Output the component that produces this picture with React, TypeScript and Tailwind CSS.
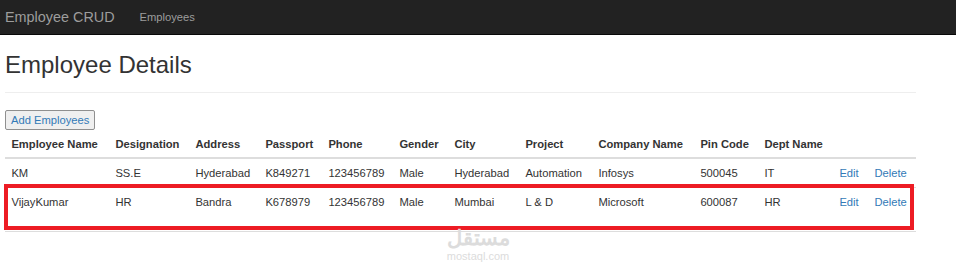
export default function App() {
  const columns = [
    { label: "Employee Name", w: "w-[104px]" },
    { label: "Designation", w: "w-[80px]" },
    { label: "Address", w: "w-[70px]" },
    { label: "Passport", w: "w-[63px]" },
    { label: "Phone", w: "w-[71px]" },
    { label: "Gender", w: "w-[55px]" },
    { label: "City", w: "w-[71px]" },
    { label: "Project", w: "w-[73px]" },
    { label: "Company Name", w: "w-[102px]" },
    { label: "Pin Code", w: "w-[64px]" },
    { label: "Dept Name", w: "w-[75px]" },
    { label: "", w: "w-[35px]" },
    { label: "", w: "" },
  ]

  const employees = [
    ["KM", "SS.E", "Hyderabad", "K849271", "123456789", "Male", "Hyderabad", "Automation", "Infosys", "500045", "IT"],
    ["VijayKumar", "HR", "Bandra", "K678979", "123456789", "Male", "Mumbai", "L & D", "Microsoft", "600087", "HR"],
  ]

  return (
    <div className="relative min-h-[266px] bg-white font-['Liberation_Sans',Arial,sans-serif] text-[11.2px] leading-[16px] text-[#333]">
      {/* Navbar */}
      <nav className="flex h-[35px] items-center bg-[#222] border-b border-[#080808]">
        <span className="ml-[5px] text-[14.4px] text-[#9d9d9d]">Employee CRUD</span>
        <span className="ml-[25px] text-[11.2px] text-[#9d9d9d]">Employees</span>
      </nav>

      <div className="w-[911px] ml-[5px]">
        <h2 className="mt-[17px] text-[24px] leading-[26px] text-[#333]">Employee Details</h2>
        <hr className="mt-[14px] border-t border-[#eee]" />

        <button className="mt-[17px] h-[20px] rounded-[2px] border border-[#8f8f8f] bg-[#efefef] px-[5px] text-[11.2px] leading-[16px] text-[#337ab7]">
          Add Employees
        </button>

        {/* Table */}
        <table className="w-full table-fixed border-collapse">
          <thead>
            <tr>
              {columns.map((c, i) => (
                <th
                  key={i}
                  className={`${c.w} border-b-2 border-[#ddd] px-[6.4px] pt-[6px] pb-[5px] text-left align-bottom font-bold`}
                >
                  {c.label}
                </th>
              ))}
            </tr>
          </thead>
          <tbody>
            {employees.map((row, r) => (
              <tr key={r} className={r === 1 ? "h-[44px]" : ""}>
                {row.map((cell, i) => (
                  <td key={i} className="border-t border-b border-[#ddd] px-[6.4px] py-[6px] align-top">
                    {cell}
                  </td>
                ))}
                <td className="border-t border-b border-[#ddd] px-[6.4px] py-[6px] align-top text-[#337ab7]">Edit</td>
                <td className="border-t border-b border-[#ddd] px-[6.4px] py-[6px] align-top text-[#337ab7]">Delete</td>
              </tr>
            ))}
          </tbody>
        </table>
      </div>

      {/* Highlight annotation */}
      <div className="absolute left-[4px] top-[184px] h-[46px] w-[910px] border-4 border-[#ed1c24]" />

      {/* Watermark */}
      <div className="absolute left-[440px] top-[226px] flex w-[76px] flex-col items-center text-[#dcdcdc]">
        <span className="font-['Noto_Sans',sans-serif] text-[21px] font-bold leading-[22px]">مستقل</span>
        <span className="mt-[2px] text-[11px] leading-[12px]">mostaql.com</span>
      </div>
    </div>
  )
}
